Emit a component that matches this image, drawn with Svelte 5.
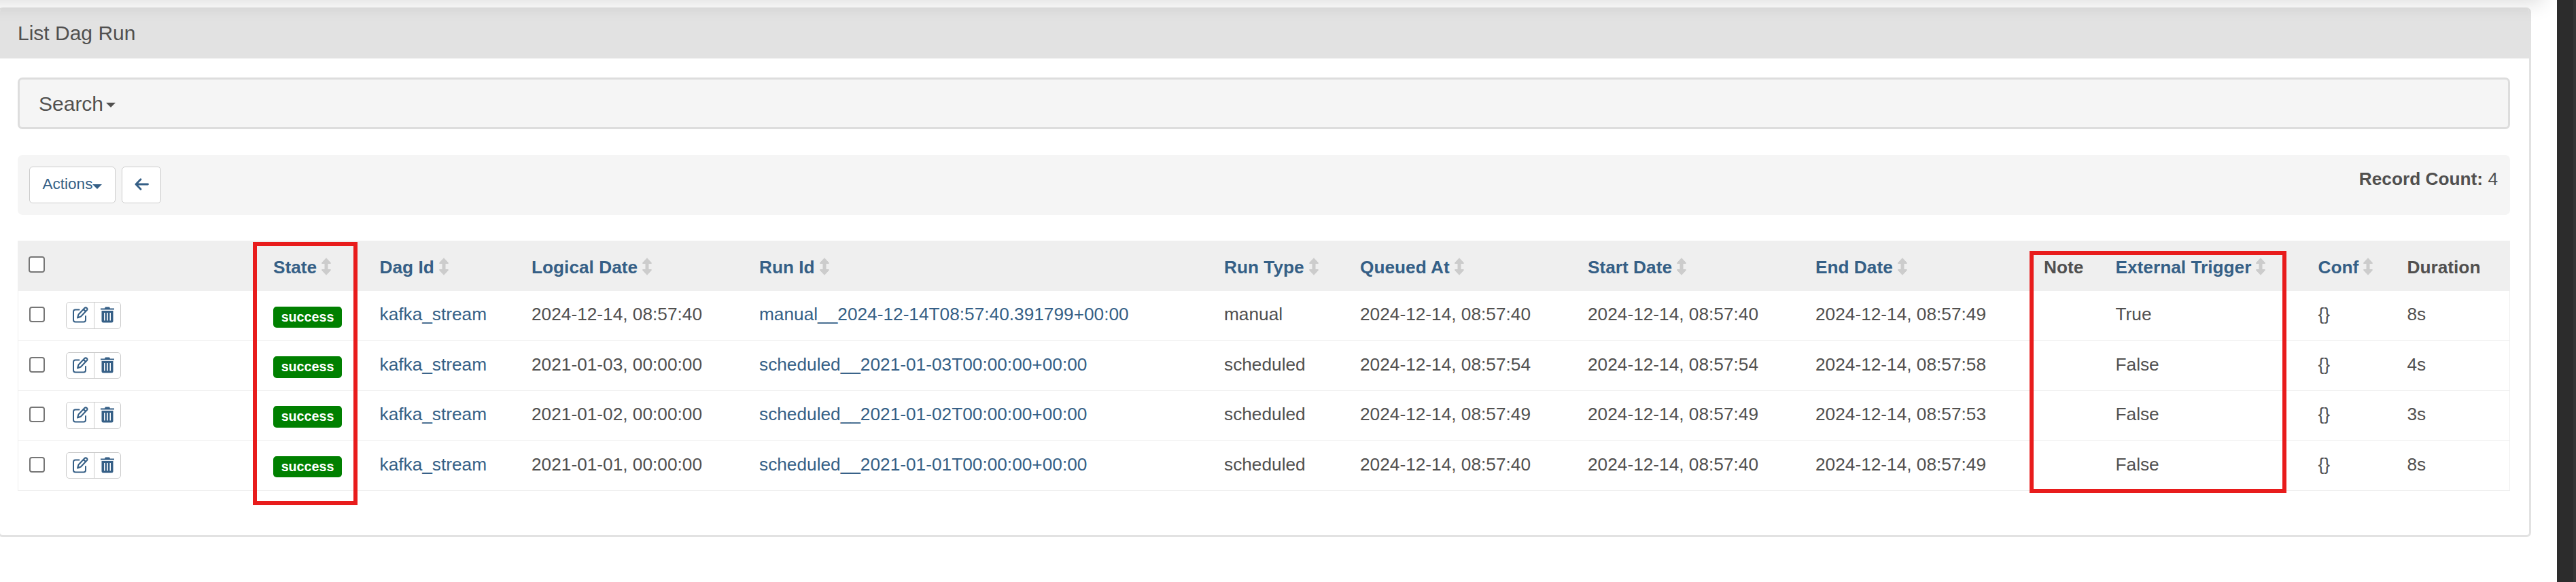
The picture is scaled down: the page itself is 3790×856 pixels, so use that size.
<script>
  const columns = [
    { label: 'State', sort: true },
    { label: 'Dag Id', sort: true },
    { label: 'Logical Date', sort: true },
    { label: 'Run Id', sort: true },
    { label: 'Run Type', sort: true },
    { label: 'Queued At', sort: true },
    { label: 'Start Date', sort: true },
    { label: 'End Date', sort: true },
    { label: 'Note', sort: false },
    { label: 'External Trigger', sort: true },
    { label: 'Conf', sort: true },
    { label: 'Duration', sort: false }
  ];
  const runs = [
    { logical: '2024-12-14, 08:57:40', id: 'manual__2024-12-14T08:57:40.391799+00:00', type: 'manual', queued: '2024-12-14, 08:57:40', start: '2024-12-14, 08:57:40', end: '2024-12-14, 08:57:49', ext: 'True', dur: '8s' },
    { logical: '2021-01-03, 00:00:00', id: 'scheduled__2021-01-03T00:00:00+00:00', type: 'scheduled', queued: '2024-12-14, 08:57:54', start: '2024-12-14, 08:57:54', end: '2024-12-14, 08:57:58', ext: 'False', dur: '4s' },
    { logical: '2021-01-02, 00:00:00', id: 'scheduled__2021-01-02T00:00:00+00:00', type: 'scheduled', queued: '2024-12-14, 08:57:49', start: '2024-12-14, 08:57:49', end: '2024-12-14, 08:57:53', ext: 'False', dur: '3s' },
    { logical: '2021-01-01, 00:00:00', id: 'scheduled__2021-01-01T00:00:00+00:00', type: 'scheduled', queued: '2024-12-14, 08:57:40', start: '2024-12-14, 08:57:40', end: '2024-12-14, 08:57:49', ext: 'False', dur: '8s' }
  ];
</script>

<div class="window">
  <div class="page">
    <main class="panel">
      <header class="title">List Dag Run</header>
      <div class="content">
        <div class="search">Search<span class="caret"></span></div>
        <div class="toolbar">
          <button class="btn actions">Actions<span class="caret"></span></button>
          <button class="btn back" aria-label="Back">
            <svg width="21" height="18" viewBox="0 0 21 18"><path d="M19.500 9H2.500M9 1.700 2 9l7 7.300" fill="none" stroke="currentColor" stroke-width="2.800" stroke-linecap="round" stroke-linejoin="round" /></svg>
          </button>
          <div class="count"><b>Record Count:</b> 4</div>
        </div>
        <div class="table">
          <div class="row head">
            <div class="cell"><span class="check"></span></div>
            <div class="cell"></div>
            {#each columns as c}
              <div class="cell" class:link={c.sort}>{c.label}{#if c.sort}<svg class="sort" width="14" height="26" viewBox="0 0 14 26"><path d="M7 .7 13.300 7.500V8.500H9V17.500H13.300V18.500L7 25.300 .7 18.500V17.500H5V8.500H.7V7.500Z" fill="#ccc" stroke="#ccc" stroke-width="1" stroke-linejoin="round" /></svg>{/if}</div>
            {/each}
          </div>
          {#each runs as r}
            <div class="row">
              <div class="cell"><span class="check"></span></div>
              <div class="cell">
                <div class="group">
                  <span class="act edit"><svg width="24" height="24" viewBox="0 0 24 24" fill="none" stroke="currentColor" stroke-width="2" stroke-linejoin="round" stroke-linecap="round"><path d="M10.500 4.500H5Q2 4.500 2 7.500V19.500Q2 22.500 5 22.500H17Q20 22.500 20 19.500V14" /><path d="M8 16.500 9.500 11.500 18.500 2Q20 .7 21.700 2 23.200 3.600 22 5L13 14.500Z M17 4 20 7" /></svg></span>
                  <span class="act"><svg width="20" height="24" viewBox="0 0 20 24"><path fill="currentColor" fill-rule="evenodd" d="M0 2.500H6L7 .5H13L14 2.500H20V4.500H0ZM1.500 6H18.500V21Q18.500 23.500 16 23.500H4Q1.500 23.500 1.500 21ZM5 9V20.500H6.500V9ZM9.200 9V20.500H10.800V9ZM13.500 9V20.500H15V9Z" /></svg></span>
                </div>
              </div>
              <div class="cell"><span class="badge">success</span></div>
              <div class="cell link">kafka_stream</div>
              <div class="cell">{r.logical}</div>
              <div class="cell link">{r.id}</div>
              <div class="cell">{r.type}</div>
              <div class="cell">{r.queued}</div>
              <div class="cell">{r.start}</div>
              <div class="cell">{r.end}</div>
              <div class="cell"></div>
              <div class="cell">{r.ext}</div>
              <div class="cell">{'{}'}</div>
              <div class="cell">{r.dur}</div>
            </div>
          {/each}
        </div>
      </div>
    </main>
  </div>
  <div class="gutter"></div>
  <div class="shade"></div>
  <div class="mark state"></div>
  <div class="mark trigger"></div>
</div>

<style>
  :global(body) { background: #fff; }
  * { box-sizing: border-box; }
  .window {
    position: relative;
    display: flex;
    width: 3790px;
    height: 856px;
    overflow: hidden;
    font: 26.25px/37px "Liberation Sans", Arial, sans-serif;
    color: #51504f;
    background: #fff;
  }
  .page { width: 3762px; padding: 11px 38px 0 0; }
  .gutter { width: 28px; background: #2c2c2c; border-right: 4px solid #353535; }
  .shade {
    position: absolute;
    left: -60px;
    top: -40px;
    width: 3802px;
    height: 40px;
    box-shadow: 0 4px 30px rgba(0, 0, 0, 0.14);
    clip-path: inset(0 -20px -60px 0);
  }
  .panel {
    height: 779px;
    margin-left: -3px;
    border: 3px solid #e2e2e2;
    border-top: 0;
    border-radius: 7px;
    overflow: hidden;
  }
  .title { height: 75px; padding: 19px 26px; font-size: 30px; line-height: 38px; background: #e2e2e2; }
  .content { padding: 28px 28px 0 26px; }
  .search {
    display: flex;
    align-items: center;
    height: 76px;
    padding: 0 0 0 28px;
    border: 3px solid #ddd;
    border-radius: 7px;
    font-size: 30px;
    background: #f5f5f5;
  }
  .caret {
    border: 7px solid transparent;
    border-top-color: currentColor;
    border-bottom: 0;
  }
  .search .caret { margin: 4px 0 0 4px; }
  .toolbar {
    display: flex;
    gap: 9px;
    height: 88px;
    margin-top: 38px;
    padding: 17px 18px 17px 17px;
    border-radius: 7px;
    background: #f5f5f5;
  }
  .btn {
    display: flex;
    align-items: center;
    justify-content: center;
    height: 54px;
    padding: 0;
    border: 1px solid #ccc;
    border-radius: 5px;
    background: #fff;
    color: #355f86;
    font: 22.5px/34px "Liberation Sans", Arial, sans-serif;
  }
  .actions { width: 127px; padding-bottom: 2px; }
  .actions .caret { margin: 7px 0 0 0; }
  .back { width: 58px; padding-bottom: 3px; }
  .count { margin: 0 0 0 auto; }
  .table { margin-top: 38px; }
  .row {
    display: grid;
    grid-template-columns: 55px 305px 156.500px 223.500px 335px 684px 200px 335px 335px 336px 105.500px 298px 131px 1fr;
    height: 73px;
    border: 1px solid #efefef;
    border-top: 0;
  }
  .row:nth-child(odd) { height: 74px; padding-top: 1px; }
  .row.head { height: 74px; padding-top: 5px; background: #efefef; font-weight: 700; }
  .cell { padding: 16px 0 0 15px; white-space: nowrap; }
  .link { color: #355f86; }
  .sort { margin-left: 7px; vertical-align: -3px; }
  .check {
    display: block;
    width: 23px;
    height: 23px;
    margin: 7px 0 0 1px;
    border: 2px solid #767676;
    border-radius: 4px;
    background: #fff;
  }
  .head .check { width: 24px; height: 24px; margin: 2px 0 0 0; }
  .group {
    display: flex;
    width: 81px;
    height: 40px;
    border: 1px solid #ccc;
    border-radius: 5px;
    color: #355f86;
  }
  .row:nth-child(odd) .group { height: 39px; }
  .act { display: flex; justify-content: center; flex: 1; padding-top: 6px; }
  .edit { flex: 0 0 41px; border-right: 1px solid #ccc; }
  .badge {
    display: block;
    width: 101px;
    height: 32px;
    margin-top: 6px;
    border-radius: 5px;
    background: #008000;
    color: #fff;
    text-align: center;
    font-size: 19.7px;
    font-weight: 700;
    line-height: 31px;
  }
  .row:nth-child(2) .badge { height: 31px; margin-top: 7px; }
  .row:last-child .badge { height: 31px; }
  .mark { position: absolute; border: 6px solid #e81c1c; }
  .state { left: 372px; top: 356px; width: 154px; height: 387px; }
  .trigger { left: 2986px; top: 369px; width: 378px; height: 356px; }
</style>
